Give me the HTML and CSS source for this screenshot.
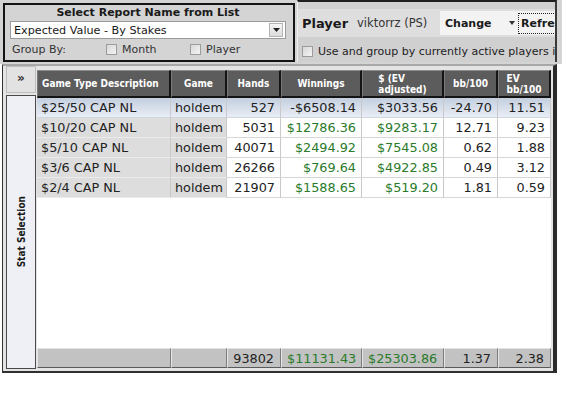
FILE: index.html
```html
<!DOCTYPE html>
<html>
<head>
<meta charset="utf-8">
<title>Report</title>
<link rel="stylesheet" href="styles.css">
</head>
<body>
<div class="top">
  <div class="report-panel">
    <div class="report-title">Select Report Name from List</div>
    <div class="select">
      <span class="select-text">Expected Value - By Stakes</span>
      <span class="select-btn"><svg width="7" height="4" viewBox="0 0 7 4"><path d="M0 0h7L3.5 4z" fill="#222"/></svg></span>
    </div>
    <div class="group-row">
      <span class="group-label">Group By:</span>
      <span class="check check-month"><span class="box"></span>Month</span>
      <span class="check"><span class="box"></span>Player</span>
    </div>
  </div>
  <div class="player-panel">
    <div class="player-bar">
      <span class="player-label">Player</span>
      <span class="player-name">viktorrz (PS)</span>
      <span class="btns">
        <span class="btn-change">Change</span>
        <span class="caret"><svg width="6" height="4" viewBox="0 0 6 4"><path d="M0 0h6L3 4z" fill="#333"/></svg></span>
        <span class="btn-refresh">Refresh</span>
      </span>
    </div>
    <div class="check active-row"><span class="box"></span>Use and group by currently active players in table</div>
  </div>
</div>
<div class="main">
  <div class="sidebar">
    <div class="expand">»</div>
    <div class="stat-tab"><span>Stat Selection</span></div>
  </div>
  <div class="grid">
    <table class="data">
      <colgroup>
        <col class="c1"><col class="c2"><col class="c3"><col class="c4"><col class="c5"><col class="c6"><col class="c7">
      </colgroup>
      <thead>
        <tr class="head-row">
          <th class="first"><span>Game Type Description</span></th>
          <th><span>Game</span></th>
          <th><span>Hands</span></th>
          <th><span>Winnings</span></th>
          <th><span>$ (EV<br>adjusted)</span></th>
          <th><span>bb/100</span></th>
          <th><span>EV<br>bb/100</span></th>
        </tr>
      </thead>
      <tbody>
        <tr class="selected">
          <td class="desc">$25/50 CAP NL</td><td class="game">holdem</td><td class="num">527</td><td class="num">-$6508.14</td><td class="num">$3033.56</td><td class="num">-24.70</td><td class="num">11.51</td>
        </tr>
        <tr>
          <td class="desc">$10/20 CAP NL</td><td class="game">holdem</td><td class="num">5031</td><td class="num pos">$12786.36</td><td class="num pos">$9283.17</td><td class="num">12.71</td><td class="num">9.23</td>
        </tr>
        <tr>
          <td class="desc">$5/10 CAP NL</td><td class="game">holdem</td><td class="num">40071</td><td class="num pos">$2494.92</td><td class="num pos">$7545.08</td><td class="num">0.62</td><td class="num">1.88</td>
        </tr>
        <tr>
          <td class="desc">$3/6 CAP NL</td><td class="game">holdem</td><td class="num">26266</td><td class="num pos">$769.64</td><td class="num pos">$4922.85</td><td class="num">0.49</td><td class="num">3.12</td>
        </tr>
        <tr>
          <td class="desc">$2/4 CAP NL</td><td class="game">holdem</td><td class="num">21907</td><td class="num pos">$1588.65</td><td class="num pos">$519.20</td><td class="num">1.81</td><td class="num">0.59</td>
        </tr>
        <tr class="filler"><td colspan="7"></td></tr>
      </tbody>
      <tfoot>
        <tr class="foot-row">
          <td></td><td></td><td class="num">93802</td><td class="num pos">$11131.43</td><td class="num pos">$25303.86</td><td class="num">1.37</td><td class="num">2.38</td>
        </tr>
      </tfoot>
    </table>
  </div>
</div>
</body>
</html>
```
FILE: styles.css
```css
* { box-sizing: border-box; }
body {
  margin: 0;
  width: 562px;
  height: 398px;
  overflow: hidden;
  background: #ffffff;
  font-family: "DejaVu Sans", Verdana, sans-serif;
  color: #222;
}

/* ---------- top area ---------- */
.top {
  height: 64px;
  background: #d4d4d4;
  display: flex;
  align-items: flex-start;
}
.report-panel {
  flex: none;
  margin: 3px 0 0 3px;
  width: 292px;
  height: 59px;
  border: 2px solid #141414;
  padding: 1px 7px 0 5px;
  display: flex;
  flex-direction: column;
}
.report-title {
  height: 14px;
  line-height: 14px;
  text-align: center;
  font-weight: bold;
  font-size: 11px;
  color: #1a1a1a;
}
.select {
  margin-top: 1px;
  height: 18px;
  background: #fff;
  border: 1px solid #9a9a9a;
  display: flex;
  align-items: center;
  justify-content: space-between;
  padding: 0 2px 0 3px;
}
.select-text { font-size: 11.2px; color: #1a1a1a; }
.select-btn {
  flex: none;
  width: 14px;
  height: 14px;
  background: linear-gradient(#f6f6f6, #dcdcdc);
  border: 1px solid #b4b4b4;
  display: flex;
  align-items: center;
  justify-content: center;
}
.group-row {
  height: 20px;
  display: flex;
  align-items: center;
  font-size: 11px;
  color: #333;
}
.group-label { flex: none; width: 96px; padding-left: 2px; }
.check { display: flex; align-items: center; }
.check-month { flex: none; width: 84px; }
.box {
  flex: none;
  width: 11px;
  height: 11px;
  margin-right: 5px;
  border: 1px solid #9c9c9c;
  background: linear-gradient(135deg, #d8d8d8, #f4f4f4);
}

.player-panel {
  flex: none;
  margin-left: 2px;
  width: 260px;
  height: 62px;
  border-top: 2px solid #1e1e1e;
  border-left: 1px solid #efefef;
  border-right: 2px solid #3a3a3a;
  background: #d0d0d0;
  overflow: hidden;
  display: flex;
  flex-direction: column;
}
.player-bar {
  flex: none;
  margin-top: 7px;
  height: 28px;
  background: #dedede;
  display: flex;
  align-items: center;
  white-space: nowrap;
  padding-left: 4px;
}
.player-label { flex: none; font-weight: bold; font-size: 13px; color: #1a1a1a; width: 55px; }
.player-name { flex: none; font-size: 11.5px; color: #333; width: 83px; }
.btns {
  flex: none;
  width: 140px;
  height: 24px;
  background: #f3f3f3;
  display: flex;
  align-items: center;
  padding-left: 5px;
}
.btn-change { flex: none; font-weight: bold; font-size: 11px; color: #1a1a1a; width: 64px; }
.caret { flex: none; width: 9px; display: flex; align-items: center; }
.btn-refresh {
  flex: none;
  font-weight: bold;
  font-size: 11px;
  color: #1a1a1a;
  border: 1px dotted #222;
  padding: 3px 2px;
}
.active-row {
  flex: none;
  margin-top: 8px;
  padding-left: 4px;
  font-size: 11px;
  color: #222;
  white-space: nowrap;
}

/* ---------- main area ---------- */
.main {
  margin-left: 2px;
  width: 555px;
  height: 309px;
  border-left: 1px solid #333;
  border-top: 2px solid #a8a8a8;
  border-bottom: 2px solid #303030;
  border-right: 4px solid #2a2a2a;
  background: #e4e4e4;
  display: flex;
}
.sidebar {
  flex: none;
  width: 34px;
  padding: 0 1px 2px 3px;
  display: flex;
  flex-direction: column;
  gap: 2px;
}
.expand {
  height: 27px;
  background: #e2e2e2;
  border: 1px solid #bdbdbd;
  display: flex;
  align-items: center;
  justify-content: center;
  font-size: 12px;
  font-weight: bold;
  color: #333;
  padding-bottom: 4px;
}
.stat-tab {
  flex: 1;
  background: #eef0f5;
  border: 1px solid #4a4a4a;
  display: flex;
  align-items: center;
  justify-content: center;
}
.stat-tab span {
  writing-mode: vertical-rl;
  transform: rotate(180deg);
  font-family: "DejaVu Sans Condensed", "DejaVu Sans", sans-serif;
  font-weight: bold;
  font-size: 10px;
  color: #1a1a1a;
}
.grid {
  flex: 1;
  padding: 4px 2px 0 0;
}
.data {
  width: 514px;
  table-layout: fixed;
  border-collapse: separate;
  border-spacing: 0;
  font-size: 12.8px;
}
.c1 { width: 134px; }
.c2 { width: 56px; }
.c3 { width: 54px; }
.c4 { width: 81px; }
.c5 { width: 82px; }
.c6 { width: 54px; }
.c7 { width: 53px; }

.data tr { height: 20px; }
.data tr.head-row { height: 28px; }
.data tr.filler { height: 150px; }
.data tr.foot-row { height: 20px; }

.data th {
  padding: 0 2px;
  background: #5c5c5c;
  color: #fff;
  font-family: "DejaVu Sans Condensed", "DejaVu Sans", sans-serif;
  font-weight: bold;
  font-size: 10px;
  line-height: 11px;
  text-align: center;
  border-top: 1px solid #8c8c8c;
  border-left: 1px solid #7a7a7a;
  border-right: 2px solid #141414;
  border-bottom: 2px solid #141414;
}
.data th span { display: inline-block; text-align: left; }
.data th.first { text-align: left; padding-left: 4px; }

.data td {
  padding: 0 5px;
  white-space: nowrap;
  background: #fff;
  border-right: 1px solid #c9c9c9;
  border-bottom: 1px solid #d6d6d6;
}
.data td.desc { background: #dddddd; border-bottom-color: #ebebeb; padding-left: 4px; }
.data td.game { background: #dcdcdc; border-bottom-color: #ebebeb; padding-left: 4px; }
.data td.num { text-align: right; }
.data td.pos { color: #2a7a2a; }
.data tr.selected td { background: linear-gradient(#c3cede, #e9eef6); border-bottom-color: #cfd6e2; }
.data tr.filler td { border: none; background: #fff; }

.data tfoot td {
  background: #c2c2c2;
  border-top: 1px solid #e2e2e2;
  border-left: 1px solid #e6e6e6;
  border-right: 1px solid #7c7c7c;
  border-bottom: 1px solid #5a5a5a;
  padding-right: 6px;
}
```
